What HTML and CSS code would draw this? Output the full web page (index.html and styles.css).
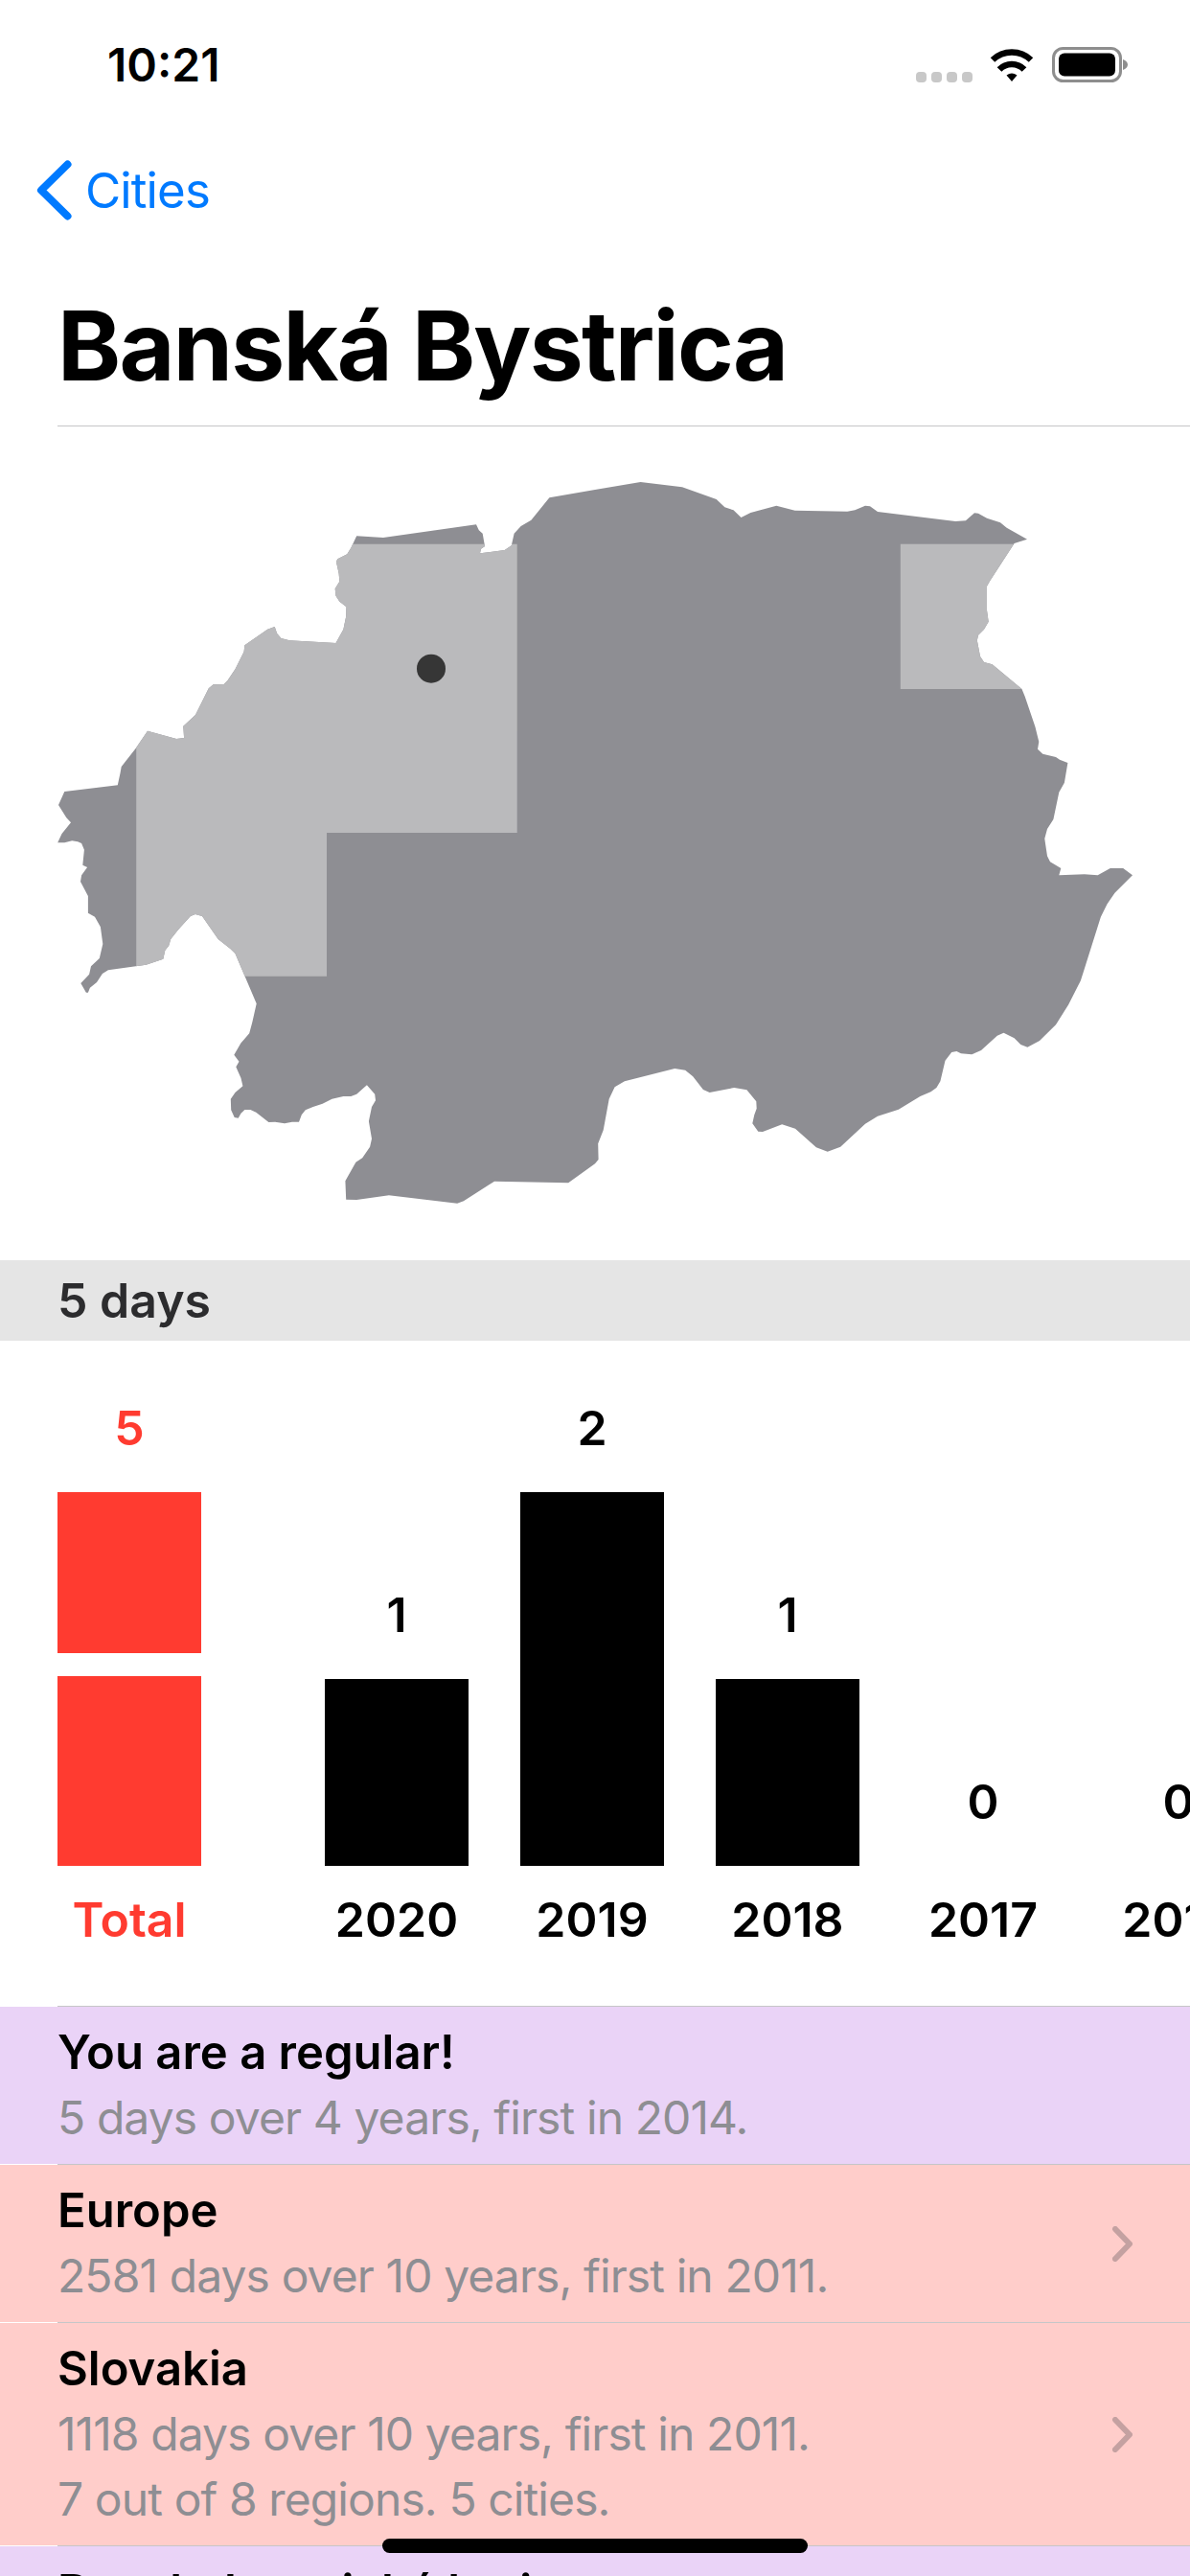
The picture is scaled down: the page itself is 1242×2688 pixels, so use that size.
FILE: index.html
```html
<!DOCTYPE html>
<html lang="en">
<head>
<meta charset="UTF-8">
<meta name="viewport" content="width=device-width, initial-scale=1.0">
<title>Banská Bystrica</title>
<link rel="stylesheet" href="styles.css">
</head>
<body>
<div class="status">
  <span class="time">10:21</span>
  <div class="status-icons">
    <div class="signal"><i></i><i></i><i></i><i></i></div>
    <svg class="wifi" width="46" height="36" viewBox="0 0 46 36">
      <path d="M3 13.5A29 29 0 0 1 43 13.5M10 23.5A18 18 0 0 1 36 23.5" fill="none" stroke="#000" stroke-width="6.5"/>
      <path d="M23 36L17.5 29.5A9 9 0 0 1 28.5 29.5Z" fill="#000"/>
    </svg>
    <svg class="battery" width="79" height="37" viewBox="0 0 79 37">
      <rect x="1.5" y="1.5" width="70" height="34" rx="10" fill="none" stroke="#8e8e8e" stroke-width="3"/>
      <rect x="7" y="6.5" width="59" height="24" rx="6" fill="#000"/>
      <path d="M74 13C77 14 79 16 79 18.500C79 21 77 23 74 24Z" fill="#8e8e8e"/>
    </svg>
  </div>
</div>

<div class="nav">
  <svg class="back" width="37" height="63" viewBox="0 0 37 63">
    <path d="M32.500 4.500L5 31.500L32.500 58.500" fill="none" stroke="#007aff" stroke-width="8" stroke-linecap="round" stroke-linejoin="round"/>
  </svg>
  <span class="back-text">Cities</span>
</div>

<h1 class="title">Banská Bystrica</h1>
<div class="sep"></div>

<svg class="map" width="1242" height="870" viewBox="0 445 1242 870">
  <defs>
    <clipPath id="outline">
      <path id="outline-path" d="M621 511L668.500 503L712 508.300L747.700 521L756.400 529.300L765.500 532.300L773.500 540L783.400 535L810.300 527.700L829.700 532.700L884.300 533.700L892.300 532.300L903 527.700L908 528.300L916 534L997.200 544L1007.900 543.300L1017 535.300L1021 535.700L1030 540.700L1044 545.300L1050.700 550.700L1072 562.700L1058.600 567L1032.800 606.700L1030 611.700L1030 636.700L1031.700 648.700L1027 656.700L1021 662.700L1019.800 668.300L1023 685L1027 691L1035.600 693.300L1066.500 719L1069.700 726.700L1080.400 758.300L1084.300 774L1083 781.700L1088.300 786.700L1102 790L1106 792.700L1114.400 796L1110.900 816.700L1105.300 826.700L1099.400 855L1093 865L1090.300 875L1091 880L1093 893.300L1096 899.300L1107.300 906L1105.300 913.300L1131.800 912.300L1145.700 913.300L1158.800 906L1172.200 906L1182 913.300L1163.500 931.700L1155.600 943.300L1148.900 956.700L1127.900 1023.300L1115.200 1048.300L1102 1069.300L1085 1086L1072.400 1092.700L1065.300 1090L1058.600 1083.300L1047.500 1077.700L1040.800 1080.700L1024 1096L1014.200 1100.300L1003 1099.300L998.400 1097L993.200 1098L986.500 1106.700L981.400 1128.300L977.400 1135L971.500 1139.300L960.400 1144L937.800 1157.700L916 1164.700L903 1172.700L877.200 1196.700L863.700 1201.700L851.900 1197.300L830 1177.700L816.200 1173.300L796 1181L791.300 1180.700L785.300 1172.300L787.300 1163.300L789.700 1156.700L789.300 1149.300L779.400 1137.300L766.300 1135L740.600 1140L733.900 1137L723.200 1123.300L715.200 1116.700L704.200 1115L651.900 1128.300L641.600 1134.300L635.700 1146.700L629.700 1179.300L624.200 1193.300L624.600 1210L621 1214.300L593.200 1234.300L516 1232.700L483.900 1253.300L477.200 1255.700L405.900 1247.300L372.200 1252L361.200 1251.700L360.400 1232.300L368.300 1218.300L371.400 1212.700L378.200 1208.300L386.100 1196.700L388 1188.300L384.900 1170L388 1155L392 1148.300L391.200 1141.700L382.900 1132.300L372.200 1141.700L366.300 1144L358.400 1144L346.500 1146.700L336.600 1151.700L326.700 1155L318.800 1158.300L314.800 1163.300L312 1170.700L304.900 1170.700L297 1172.300L287.100 1170.700L280.400 1171L267.300 1160.700L261.400 1158L255.400 1158L251.500 1161.700L248.700 1166.700L244.700 1166L241.200 1158.300L240.800 1146.700L245.500 1140L253.400 1133.300L251.500 1125L246.300 1113.300L249.500 1107.700L244.300 1100.700L251.500 1088.300L260.200 1078.300L263.300 1066.700L267.700 1047.300L245.500 995L240.400 990L227.700 980L211 956L203.900 954L198.800 956L186.100 970L178.200 980L176.200 986.700L172.300 991.700L170.300 1000.700L152.500 1006.700L112.900 1012.300L106.900 1016L101 1025L93.900 1030.700L91.900 1035.700L89.900 1035.700L84.300 1026L93.100 1016.700L95 1008.300L103.800 1000L107.300 985L104.900 967.300L99 956.700L91.900 952.700L91.900 935L84 920L85.100 913.300L91.100 905L86.300 902.700L87.900 886.700L85.100 880L81.200 878.300L75.200 877.300L67.300 879.300L60.200 879.300L64.500 870L74 858.300L69.300 853.300L61 840L67.300 826L122.800 819.300L125.500 806.700L126.700 800L141.800 780.700L154 762.700L184.100 771L192.100 770L191.300 757.700L204 746L217.800 718.300L222.600 714.300L233.600 714L237.600 710L245.500 698.300L254.600 680L255.400 673.300L279.200 656.700L286.700 654L289.100 661L293.400 666L302.100 668.300L350.500 671L358.400 656.700L361.200 643.300L361.500 633.300L354.400 627.700L350.500 621.700L349.700 614.300L354.400 606.700L353.600 598.300L350.900 586L352.400 583.300L362.300 578.300L366.300 571.700L372.200 559.300L400 561L497 547.300L499.800 553.300L503.700 556.700L506 570L502 572.700L501 577.300L526.700 574L533.800 569.300L536.600 556.700L543.700 549L554.400 542.700L573.400 519.300Z"/>
    </clipPath>
  </defs>
  <use href="#outline-path" class="map-land"/>
  <g clip-path="url(#outline)">
    <path class="map-visited" d="M142.200 567.700H539.700V869H341V1018.700H142.200Z"/>
    <rect class="map-visited" x="939.800" y="567.700" width="160" height="151.300"/>
  </g>
  <circle class="map-dot" cx="450" cy="697.700" r="15"/>
</svg>

<div class="section-head">5 days</div>

<div class="chart">
  <div class="col col-total">
    <span class="num">5</span>
    <div class="bar" style="height:168px"></div>
    <div class="bar bar-gap" style="height:198px"></div>
    <span class="year">Total</span>
  </div>
  <div class="col">
    <span class="num">1</span>
    <div class="bar" style="height:195px"></div>
    <span class="year">2020</span>
  </div>
  <div class="col">
    <span class="num">2</span>
    <div class="bar" style="height:390px"></div>
    <span class="year">2019</span>
  </div>
  <div class="col">
    <span class="num">1</span>
    <div class="bar" style="height:195px"></div>
    <span class="year">2018</span>
  </div>
  <div class="col">
    <span class="num">0</span>
    <div class="bar" style="height:0"></div>
    <span class="year">2017</span>
  </div>
  <div class="col">
    <span class="num">0</span>
    <div class="bar" style="height:0"></div>
    <span class="year">2016</span>
  </div>
</div>

<div class="sep"></div>
<div class="row row-purple">
  <div class="row-text">
    <div class="row-title">You are a regular!</div>
    <div class="row-sub">5 days over 4 years, first in 2014.</div>
  </div>
</div>
<div class="sep"></div>
<div class="row row-pink">
  <div class="row-text">
    <div class="row-title">Europe</div>
    <div class="row-sub">2581 days over 10 years, first in 2011.</div>
  </div>
  <svg class="chevron" width="21" height="37" viewBox="0 0 21 37">
    <path d="M3 3L18 18.500L3 34" fill="none" stroke="#3c3c43" stroke-opacity="0.3" stroke-width="6" stroke-linecap="round" stroke-linejoin="round"/>
  </svg>
</div>
<div class="sep"></div>
<div class="row row-pink">
  <div class="row-text">
    <div class="row-title">Slovakia</div>
    <div class="row-sub">1118 days over 10 years, first in 2011.</div>
    <div class="row-sub">7 out of 8 regions. 5 cities.</div>
  </div>
  <svg class="chevron" width="21" height="37" viewBox="0 0 21 37">
    <path d="M3 3L18 18.500L3 34" fill="none" stroke="#3c3c43" stroke-opacity="0.3" stroke-width="6" stroke-linecap="round" stroke-linejoin="round"/>
  </svg>
</div>
<div class="sep"></div>
<div class="row row-purple">
  <div class="row-text">
    <div class="row-title">Banskobystrický kraj</div>
  </div>
</div>

<div class="home-bar"></div>
</body>
</html>
```

FILE: styles.css
```css
html {
  overflow: hidden;
}

body {
  position: relative;
  height: 2688px;
  margin: 0;
  overflow: hidden;
  background-color: #fff;
  color: #000;
  font-family: Inter, "Liberation Sans", sans-serif;
}

.status {
  display: flex;
  justify-content: space-between;
  height: 132px;
  padding: 0 65px 0 112px;
  box-sizing: border-box;
}

.time {
  font-size: 48px;
  font-weight: 600;
  line-height: 54px;
  margin-top: 41px;
}

.status-icons {
  display: flex;
  align-items: flex-start;
  padding-top: 49px;
}

.signal {
  display: flex;
  gap: 5px;
  margin: 26px 18px 0 0;
}

.signal i {
  display: block;
  width: 11px;
  height: 11px;
  border-radius: 4px;
  background-color: #c8c8c8;
}

.wifi {
  margin-right: 19px;
}

.nav {
  display: flex;
  align-items: center;
  height: 133px;
  padding-left: 38px;
}

.back-text {
  margin-left: 14px;
  color: #007aff;
  font-size: 51px;
  letter-spacing: -0.9px;
}

.title {
  height: 179px;
  margin: 0;
  padding-left: 60px;
  font-size: 100px;
  font-weight: 700;
  line-height: 191px;
  letter-spacing: -1.76px;
}

.sep {
  height: 1px;
  background: linear-gradient(to right, #fff 60px, #c6c6c8 60px);
}

.map {
  display: block;
}

.map-land {
  fill: #8e8e93;
}

.map-visited {
  fill: #bababc;
}

.map-dot {
  fill: #363636;
}

.section-head {
  height: 84px;
  padding-left: 60px;
  background-color: #e5e5e5;
  color: #2c2c2e;
  font-size: 50px;
  font-weight: 600;
  line-height: 84px;
}

.chart {
  display: flex;
  align-items: flex-end;
  gap: 54px;
  height: 694px;
  padding: 0 0 60px 60px;
  box-sizing: border-box;
  overflow: hidden;
}

.col {
  display: flex;
  flex-direction: column;
  align-items: center;
  flex-shrink: 0;
  width: 150px;
}

.col-total {
  margin-right: 75px;
  color: #ff3b30;
}

.num {
  margin-bottom: 37px;
  font-size: 50px;
  font-weight: 600;
  line-height: 60px;
}

.year {
  margin-top: 26px;
  font-size: 50px;
  font-weight: 600;
  line-height: 60px;
}

.bar {
  width: 150px;
  background-color: #000;
}

.col-total .bar {
  background-color: #ff3b30;
}

.bar-gap {
  margin-top: 24px;
}

.row {
  display: flex;
  align-items: center;
  justify-content: space-between;
  padding: 14px 60px 14px 60px;
}

.row-purple {
  background-color: #ead3f7;
}

.row-pink {
  background-color: #ffcdca;
}

.row-title {
  font-size: 49px;
  font-weight: 600;
  line-height: 68px;
}

.row-sub {
  color: #8e8e93;
  font-size: 48px;
  line-height: 68px;
  letter-spacing: -0.9px;
}

.home-bar {
  position: absolute;
  left: 399px;
  top: 2649px;
  width: 444px;
  height: 15px;
  border-radius: 8px;
  background-color: #000;
}
```
